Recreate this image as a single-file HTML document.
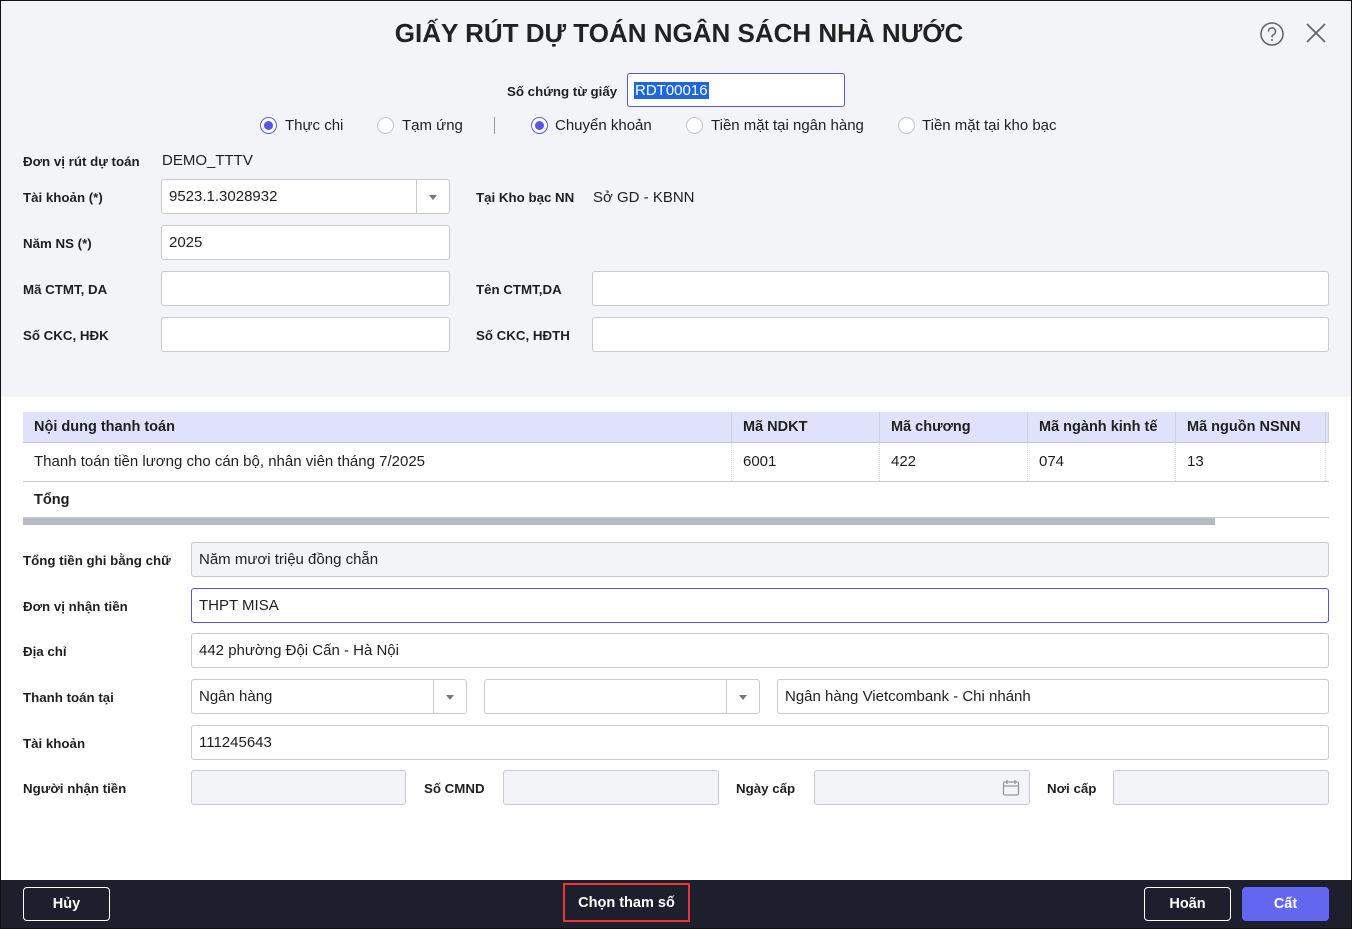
<!DOCTYPE html>
<html><head><meta charset="utf-8"><style>
*{box-sizing:border-box;margin:0;padding:0}
body{width:1352px;height:929px;overflow:hidden;font-family:"Liberation Sans",sans-serif;color:#1f1f1f;background:#fff;position:relative}
.a{position:absolute}
.top{left:0;top:0;width:1352px;height:397px;background:#f3f4f8}
.frame{left:0;top:0;width:1352px;height:929px;border:1px solid #111;pointer-events:none;z-index:9}
.lbl{position:absolute;font-size:13.3px;font-weight:bold;color:#1f1f1f;white-space:nowrap}
.txt{position:absolute;font-size:15px;white-space:nowrap}
.in{position:absolute;background:#fff;border:1px solid #c9cad0;border-radius:3px;font-size:15px;padding-left:7px;display:flex;align-items:center;white-space:nowrap}
.dis{background:#f3f4f8}
.dd{position:absolute;right:0;top:0;bottom:0;width:33px;border-left:1px solid #c9cad0}
.dd:after{content:"";position:absolute;left:12px;top:15px;border-left:4px solid transparent;border-right:4px solid transparent;border-top:5px solid #777}
.r{position:absolute;width:17px;height:17px;border-radius:50%;border:1px solid #c4c5cc;background:#fff}
.r.on{border-color:#5b5fe0}
.r.on:after{content:"";position:absolute;left:3px;top:3px;width:9px;height:9px;border-radius:50%;background:#5558e3}
.th{position:absolute;top:412px;height:31px;background:#e0e1fa;border-bottom:1px solid #c4c5d0;font-size:14.5px;font-weight:bold;padding:7px 0 0 11px;border-right:1px solid #cfd0e0}
.td{position:absolute;top:443px;height:38px;font-size:15px;padding:10px 0 0 11px;border-right:1px dotted #ddd}
.btn{position:absolute;top:887px;height:34px;border:1px solid #fff;border-radius:4px;color:#fff;font-size:14.5px;font-weight:bold;display:flex;align-items:center;justify-content:center}
</style></head><body>
<div class="a top"></div>
<div class="a" style="left:0;top:18px;width:1358px;text-align:center;font-size:26px;font-weight:bold;color:#222">GIẤY RÚT DỰ TOÁN NGÂN SÁCH NHÀ NƯỚC</div>
<svg class="a" style="left:1259px;top:21px" width="26" height="26" viewBox="0 0 26 26"><circle cx="13" cy="13" r="11" fill="none" stroke="#666" stroke-width="1.6"/><path d="M9.5 10.5a3.5 3.5 0 1 1 4.8 3.2c-.9.4-1.3 1-1.3 2v.6" fill="none" stroke="#666" stroke-width="1.6"/><circle cx="13" cy="19" r="1" fill="#666"/></svg>
<svg class="a" style="left:1305px;top:22px" width="22" height="22" viewBox="0 0 22 22"><path d="M2 2L20 20M20 2L2 20" stroke="#666" stroke-width="1.8"/></svg>

<div class="lbl" style="left:507px;top:84px">Số chứng từ giấy</div>
<div class="in" style="left:627px;top:73px;width:218px;height:34px;border-color:#5558e3;padding-left:6px"><span style="background:#1f66d9;color:#fff;padding:0 1px">RDT00016</span></div>

<div class="r on" style="left:260px;top:117px"></div><div class="txt" style="left:285px;top:117px">Thực chi</div>
<div class="r" style="left:377px;top:117px"></div><div class="txt" style="left:402px;top:117px">Tạm ứng</div>
<div class="a" style="left:494px;top:117px;width:1px;height:17px;background:#999"></div>
<div class="r on" style="left:531px;top:117px"></div><div class="txt" style="left:555px;top:117px">Chuyển khoản</div>
<div class="r" style="left:686px;top:117px"></div><div class="txt" style="left:711px;top:117px">Tiền mặt tại ngân hàng</div>
<div class="r" style="left:898px;top:117px"></div><div class="txt" style="left:922px;top:117px">Tiền mặt tại kho bạc</div>

<div class="lbl" style="left:23px;top:154px">Đơn vị rút dự toán</div>
<div class="txt" style="left:162px;top:152px">DEMO_TTTV</div>
<div class="lbl" style="left:23px;top:190px">Tài khoản (*)</div>
<div class="in" style="left:161px;top:179px;width:289px;height:35px">9523.1.3028932<div class="dd"></div></div>
<div class="lbl" style="left:476px;top:190px">Tại Kho bạc NN</div>
<div class="txt" style="left:593px;top:189px">Sở GD - KBNN</div>
<div class="lbl" style="left:23px;top:236px">Năm NS (*)</div>
<div class="in" style="left:161px;top:225px;width:289px;height:35px">2025</div>
<div class="lbl" style="left:23px;top:282px">Mã CTMT, DA</div>
<div class="in" style="left:161px;top:271px;width:289px;height:35px"></div>
<div class="lbl" style="left:476px;top:282px">Tên CTMT,DA</div>
<div class="in" style="left:592px;top:271px;width:737px;height:35px"></div>
<div class="lbl" style="left:23px;top:328px">Số CKC, HĐK</div>
<div class="in" style="left:161px;top:317px;width:289px;height:35px"></div>
<div class="lbl" style="left:476px;top:328px">Số CKC, HĐTH</div>
<div class="in" style="left:592px;top:317px;width:737px;height:35px"></div>

<div class="th" style="left:23px;width:709px">Nội dung thanh toán</div>
<div class="th" style="left:732px;width:148px">Mã NDKT</div>
<div class="th" style="left:880px;width:148px">Mã chương</div>
<div class="th" style="left:1028px;width:148px">Mã ngành kinh tế</div>
<div class="th" style="left:1176px;width:150px">Mã nguồn NSNN</div>
<div class="th" style="left:1326px;width:3px;padding:0"></div>
<div class="td" style="left:23px;width:709px">Thanh toán tiền lương cho cán bộ, nhân viên tháng 7/2025</div>
<div class="td" style="left:732px;width:148px">6001</div>
<div class="td" style="left:880px;width:148px">422</div>
<div class="td" style="left:1028px;width:148px">074</div>
<div class="td" style="left:1176px;width:150px">13</div>
<div class="a" style="left:23px;top:481px;width:1306px;height:1px;background:#c9cad0"></div>
<div class="lbl" style="left:34px;top:492px;font-size:14.5px">Tổng</div>
<div class="a" style="left:23px;top:517px;width:1192px;height:8px;background:#b8bac1"></div>
<div class="a" style="left:23px;top:517px;width:1306px;height:1px;background:#ccc"></div>

<div class="lbl" style="left:23px;top:553px">Tổng tiền ghi bằng chữ</div>
<div class="in dis" style="left:191px;top:542px;width:1138px;height:35px">Năm mươi triệu đồng chẵn</div>
<div class="lbl" style="left:23px;top:599px">Đơn vị nhận tiền</div>
<div class="in" style="left:191px;top:588px;width:1138px;height:35px;border-color:#5558e3">THPT MISA</div>
<div class="lbl" style="left:23px;top:644px">Địa chỉ</div>
<div class="in" style="left:191px;top:633px;width:1138px;height:35px">442 phường Đội Cấn - Hà Nội</div>
<div class="lbl" style="left:23px;top:690px">Thanh toán tại</div>
<div class="in" style="left:191px;top:679px;width:276px;height:35px">Ngân hàng<div class="dd"></div></div>
<div class="in" style="left:484px;top:679px;width:276px;height:35px"><div class="dd"></div></div>
<div class="in" style="left:777px;top:679px;width:552px;height:35px">Ngân hàng Vietcombank - Chi nhánh</div>
<div class="lbl" style="left:23px;top:736px">Tài khoản</div>
<div class="in" style="left:191px;top:725px;width:1138px;height:35px">111245643</div>
<div class="lbl" style="left:23px;top:781px">Người nhận tiền</div>
<div class="in dis" style="left:191px;top:770px;width:215px;height:35px"></div>
<div class="lbl" style="left:424px;top:781px">Số CMND</div>
<div class="in dis" style="left:503px;top:770px;width:216px;height:35px"></div>
<div class="lbl" style="left:736px;top:781px">Ngày cấp</div>
<div class="in dis" style="left:814px;top:770px;width:216px;height:35px"><svg style="position:absolute;right:9px;top:8px" width="18" height="18" viewBox="0 0 18 18"><rect x="1.5" y="3" width="15" height="13" rx="1.5" fill="none" stroke="#999" stroke-width="1.3"/><path d="M1.5 7h15M5 1v4M13 1v4" stroke="#999" stroke-width="1.3"/></svg></div>
<div class="lbl" style="left:1047px;top:781px">Nơi cấp</div>
<div class="in dis" style="left:1113px;top:770px;width:216px;height:35px"></div>

<div class="a" style="left:0;top:880px;width:1352px;height:49px;background:#1e1f2d"></div>
<div class="btn" style="left:23px;width:87px">Hủy</div>
<div class="btn" style="left:563px;width:127px;border:2px solid #e8353a;border-radius:0;top:883px;height:39px">Chọn tham số</div>
<div class="btn" style="left:1144px;width:87px">Hoãn</div>
<div class="btn" style="left:1242px;width:87px;background:#6366f1;border-color:#6366f1">Cất</div>
<div class="a frame"></div>
</body></html>
